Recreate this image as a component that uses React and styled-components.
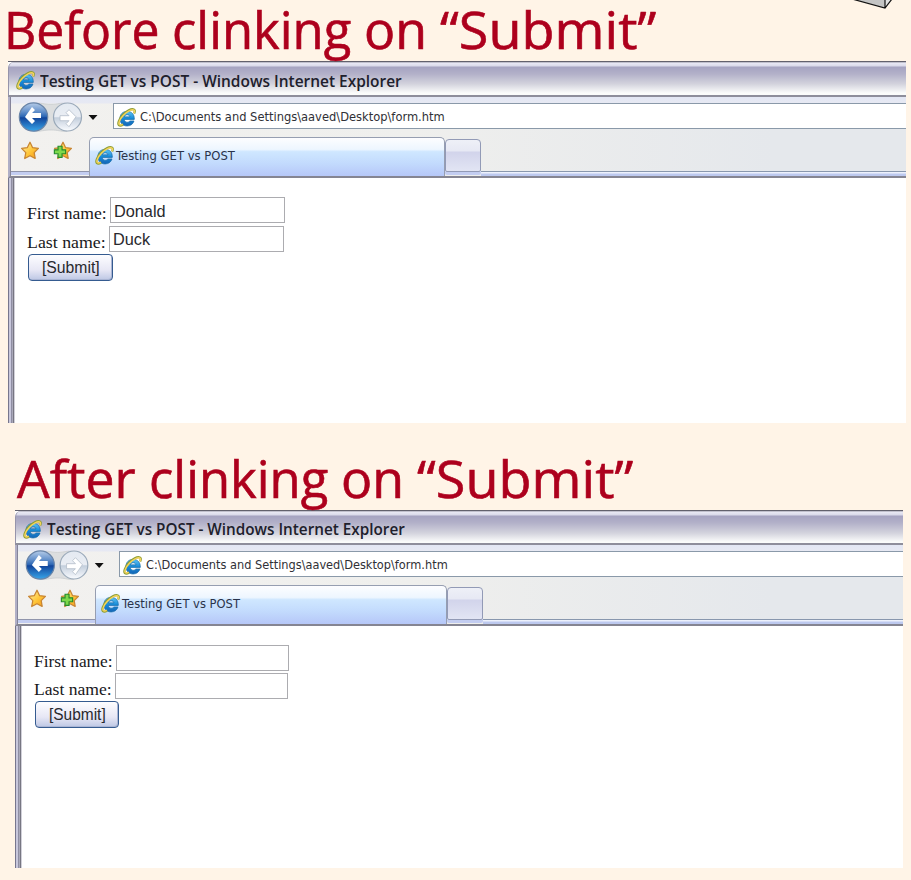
import React, { useId, useLayoutEffect, useRef, useState } from "react";
import styled, { createGlobalStyle, ThemeProvider } from "styled-components";

const GlobalStyle = createGlobalStyle`
  * { box-sizing: border-box; }
  html, body { margin: 0; background: #fff4e7; overflow: hidden; }
  input, button { margin: 0; }
`;

const sans = '"Open Sans", "Noto Sans", sans-serif';
const ui = '"DejaVu Sans", sans-serif';

const Slide = styled.main`
  position: relative;
  width: 911px;
  height: 880px;
  overflow: hidden;
  background: #fff4e7;
`;
const Corner = styled.svg`
  position: absolute;
  top: 0;
  left: 850px;
  z-index: 1;
`;
const Section = styled.section`
  display: flow-root;
  height: ${(p) => p.$height}px;
`;
const Heading = styled.h1`
  display: flex;
  margin: 0 0 0 ${(p) => p.$left}px;
  height: 61px;
  font: 400 50.5px/60px ${sans};
  color: #ad001d;
  -webkit-text-stroke: 0.6px #ad001d;
`;

const FitBox = styled.span`
  display: block;
  flex: none;
  width: ${(p) => p.$width}px;
  white-space: pre;
`;
const FitInner = styled.span`
  display: inline-block;
  transform-origin: 0 50%;
`;

/* Keeps a line of text at a fixed width by condensing its glyphs. */
function Fit({ width, children }) {
  const ref = useRef(null);
  const [scale, setScale] = useState(1);
  useLayoutEffect(() => {
    setScale(width / ref.current.offsetWidth);
  }, [width]);
  return (
    <FitBox $width={width}>
      <FitInner ref={ref} style={{ transform: `scaleX(${scale})` }}>
        {children}
      </FitInner>
    </FitBox>
  );
}

const Window = styled.div`
  width: ${(p) => p.theme.width}px;
  height: ${(p) => p.theme.height}px;
  margin-left: ${(p) => p.theme.left}px;
  display: flex;
  flex-direction: column;
  overflow: hidden;
  background: #fff;
  border-top: 1px solid #62616d;
`;
const TitleBar = styled.header`
  flex: none;
  height: ${(p) => p.theme.title}px;
  display: flex;
  align-items: center;
  gap: 5px;
  padding: 4px 0 0 7px;
  border-bottom: 2px solid #8e8e9b;
  border-left: 1px solid #9694ab;
  border-top-left-radius: 6px;
  background: linear-gradient(#9796a4 0, #e9e9f5 1px, #d9d9e9 4px, #a5a3c1 5px, #b3b1c9 12px, #d3d3dd 22px, #fbfcfb 31px);
  font: 600 16px/20px ${sans};
  color: #20202c;
`;
const Chrome = styled.div`
  flex: none;
  height: ${(p) => p.theme.chrome}px;
  border-left: 2px solid #b1afc6;
  padding-left: 1px;
  border-bottom: 2px solid #858592;
  box-shadow: inset 1px 0 #85849a;
  background: linear-gradient(90deg, #f2f1ef 0, #efefed 45%, #e5e8ec 85%);
  display: flex;
  flex-direction: column;
`;
const NavRow = styled.div`
  height: ${(p) => p.theme.nav}px;
  display: flex;
  align-items: flex-start;
  padding-top: 6px;
  background: linear-gradient(#e3e7f4 0, #e7e9f3 6px, transparent 7px);
`;
const NavButtons = styled.svg`
  flex: none;
  margin: -2px 0 0 6px;
  width: ${(p) => p.theme.navIcons}px;
  height: 33px;
`;
const Address = styled.div`
  flex: 1;
  height: ${(p) => p.theme.address}px;
  border: 1px solid #8a99a9;
  border-right: 0;
  background: #fff;
  display: flex;
  align-items: center;
  gap: 4px;
  padding: 2px 0 0 3px;
  font: 400 12.8px/18px ${ui};
  color: #303036;
`;
const TabRow = styled.div`
  flex: 1;
  min-height: 0;
  display: flex;
  align-items: flex-end;
`;
const Favorites = styled.div`
  width: ${(p) => p.theme.favorites}px;
  height: calc(100% - 4px);
  flex: none;
  display: flex;
  align-items: center;
  gap: 13px;
  padding: 0 0 3px 9px;
  border-bottom: 1px solid #9095ac;
  box-shadow: 0 3px #c3cdf1;
  margin-bottom: 4px;
`;
const ActiveTab = styled.div`
  width: ${(p) => p.theme.tab}px;
  height: ${(p) => p.theme.tabHeight}px;
  flex: none;
  display: flex;
  align-items: center;
  gap: 2px;
  padding: 0 0 3px 5px;
  border: 1px solid #969eb1;
  border-bottom: 0;
  border-radius: 5px 5px 0 0;
  background: linear-gradient(#fdfdff 0, #edf6ff 30%, #cfe7ff 36%, #c2dafd 68%, #b6c7f8 100%);
  font: 400 12.5px/18px ${ui};
  color: #29334a;
`;
const NewTab = styled.div`
  width: 36px;
  height: ${(p) => p.theme.tabHeight - 6}px;
  flex: none;
  margin-bottom: 4px;
  border: 1px solid #929ab6;
  border-radius: 4px 4px 2px 2px;
  background: linear-gradient(#eef0f7 0, #e7e9f4 34%, #d2d4eb 40%, #e2e5f4 100%);
  box-shadow: 0 3px #c3cdf1;
`;
const TabStrip = styled.div`
  flex: 1;
  height: 5px;
  border-top: 1px solid #8897ae;
  background: linear-gradient(#edf1fc 1px, #bdc9ef 2px);
`;
const Page = styled.div`
  flex: 1;
  display: flex;
  background: #fff;
`;
const Edge = styled.div`
  width: 7px;
  flex: none;
  background: linear-gradient(90deg, #77768d 0 1px, #c8c7dc 1px 3px, #8f8ea3 3px 4px, #aaa9ba 4px 5px, #777682 5px 6px, #d1d0d9 6px 7px);
`;
const Form = styled.form`
  padding: ${(p) => p.theme.pageTop}px 0 0 12px;
`;
const Field = styled.label`
  display: flex;
  height: ${(p) => p.theme.field}px;
  align-items: flex-start;
  font: 400 17.6px/20px "Liberation Serif", serif;
  color: #18181b;
`;
const LabelText = styled.span`
  padding-top: 6px;
  margin-right: 3px;
`;
const TextInput = styled.input`
  width: ${(p) => p.theme.input}px;
  height: 26px;
  padding: 2px 3px 0;
  border: 1px solid #acacb0;
  outline: 0;
  border-radius: 0;
  background: #fff;
  font: 400 16.3px/22px "Liberation Sans", sans-serif;
  color: #29292e;
`;
const Submit = styled.button`
  display: flex;
  align-items: center;
  margin-left: 1px;
  width: ${(p) => p.theme.submit}px;
  height: 27px;
  padding: 0 0 0 13px;
  border: 1px solid #355b90;
  border-radius: 4px;
  background: linear-gradient(#fdfdff, #e7e7f5 60%, #bdc7e4);
  box-shadow: inset -1px -1px #aab5d4;
  font: 400 16px/22px "Liberation Sans", sans-serif;
  color: #29292e;
  text-align: left;
`;
const Glyph = styled.svg`
  flex: none;
  display: block;
`;

function ExplorerIcon() {
  const id = useId();
  return (
    <Glyph width="19" height="19" viewBox="0.5 0.5 18 18">
      <defs>
        <linearGradient id={id} x2="0" y2="1">
          <stop stopColor="#5fc5f3" />
          <stop offset=".5" stopColor="#188bd9" />
          <stop offset="1" stopColor="#1565b6" />
        </linearGradient>
      </defs>
      <path d="M16.9 11.3H7.4c.2 1.7 1.1 2.7 2.9 2.7 1.2 0 2-.5 2.4-1.2h3.9c-.9 2.9-3.3 4.7-6.5 4.7-4.2 0-6.8-2.8-6.8-7C3.3 6.4 6 3.7 10 3.7c4.3 0 7.1 2.7 6.9 7.6ZM7.5 8.9h5.3C12.5 7.6 11.6 6.9 10.2 6.9S7.8 7.6 7.5 8.9Z" fill={`url(#${id})`} stroke="#176da9" strokeWidth=".7" />
      <path d="M16.7 5.8c.8-1.8.9-3.3-.3-3.9-2.2-1-6.8 1.3-10.3 5.1C2.4 11 .9 15.4 2.4 16.8c.9.8 2.4.4 4-.6" fill="none" stroke="#8f9e36" strokeWidth="2.2" />
      <path d="M16.5 5.6c.7-1.6.7-2.8-.2-3.2-1.9-.9-6.3 1.4-9.7 5C3 11.2 1.6 15 2.7 16.2c.7.7 1.9.4 3.2-.3" fill="none" stroke="#f4d45c" strokeWidth="1.4" />
    </Glyph>
  );
}

function Navigation() {
  const id = useId();
  const arrow = "m9-1-7-7-3 3 3 3h-9v5h9l-3 3 3 3Z";
  return (
    <NavButtons viewBox="0 0 96 33" preserveAspectRatio="none">
      <defs>
        <linearGradient id={`${id}b`} x2="0" y2="1">
          <stop stopColor="#b6cce8" />
          <stop offset=".3" stopColor="#6793cc" />
          <stop offset=".48" stopColor="#2f68b5" />
          <stop offset=".53" stopColor="#12459b" />
          <stop offset="1" stopColor="#38a6ea" />
        </linearGradient>
        <linearGradient id={`${id}f`} x2="0" y2="1">
          <stop stopColor="#e4eaf2" />
          <stop offset=".48" stopColor="#e9edf3" />
          <stop offset=".53" stopColor="#c4cfdd" />
          <stop offset="1" stopColor="#fafcff" />
        </linearGradient>
      </defs>
      <path d="M17 2.5c8-1 9 .8 17 .8s8-1.8 16-.8v28c-8 0-8-1.5-16-1.5s-9 1.5-17 1.5Z" fill="#dcdedf" stroke="#c0c4c7" strokeWidth=".6" />
      <circle cx="16.5" cy="16" r="14.2" fill={`url(#${id}b)`} stroke="#6984a7" strokeWidth="1.2" />
      <circle cx="50.5" cy="16" r="14" fill={`url(#${id}f)`} stroke="#9aa9b9" strokeWidth="1.2" />
      <path d={arrow} transform="translate(17 15) rotate(180)" fill="#fff" />
      <path d={arrow} transform="translate(50 16.7)" fill="#fff" stroke="#b3bdc9" strokeWidth=".8" />
      <path d="M71.5 14h9L76 19Z" fill="#111" />
    </NavButtons>
  );
}

const starPath = "m9.5 1.2 2.4 5 5.6.8-4 4 .9 5.6-4.9-2.6-5 2.6 1-5.6-4-4 5.5-.8Z";

function Star({ add }) {
  const id = useId();
  return (
    <Glyph width="20" height="20" viewBox="0 0 19 19">
      <defs>
        <linearGradient id={id} x1="0" y1="0" x2="1" y2="1">
          <stop stopColor="#fff3ab" />
          <stop offset=".55" stopColor="#ffc638" />
          <stop offset="1" stopColor="#f39119" />
        </linearGradient>
      </defs>
      <path d={starPath} fill={`url(#${id})`} stroke="#c88532" strokeWidth="1.2" strokeLinejoin="round" />
      {add && <path d="M4.8 5h3.8v3.4H12v3.7H8.6v3.5H4.8v-3.5H1.3V8.4h3.5Z" fill="#7ed84b" stroke="#248c2c" strokeWidth="1.1" />}
    </Glyph>
  );
}

function Browser({ metrics, first, last }) {
  return (
    <ThemeProvider theme={metrics}>
      <Window>
        <TitleBar>
          <ExplorerIcon />
          <Fit width={metrics.titleText}>Testing GET vs POST - Windows Internet Explorer</Fit>
        </TitleBar>
        <Chrome>
          <NavRow>
            <Navigation />
            <Address>
              <ExplorerIcon />
              <Fit width={metrics.addressText}>{"C:\\Documents and Settings\\aaved\\Desktop\\form.htm"}</Fit>
            </Address>
          </NavRow>
          <TabRow>
            <Favorites>
              <Star />
              <Star add />
            </Favorites>
            <ActiveTab>
              <ExplorerIcon />
              <Fit width={metrics.tabText}>Testing GET vs POST</Fit>
            </ActiveTab>
            <NewTab />
            <TabStrip />
          </TabRow>
        </Chrome>
        <Page>
          <Edge />
          <Form onSubmit={(e) => e.preventDefault()}>
            <Field>
              <LabelText><Fit width={metrics.firstLabel}>First name:</Fit></LabelText>
              <TextInput defaultValue={first} />
            </Field>
            <Field>
              <LabelText><Fit width={metrics.firstLabel - 1}>Last name:</Fit></LabelText>
              <TextInput defaultValue={last} />
            </Field>
            <Submit type="submit"><Fit width={metrics.submitText}>[Submit]</Fit></Submit>
          </Form>
        </Page>
      </Window>
    </ThemeProvider>
  );
}

const before = {
  left: 8, width: 898, height: 362, title: 35, chrome: 81, nav: 37,
  navIcons: 96, address: 26, favorites: 78, tab: 356, tabHeight: 39,
  titleText: 362, addressText: 305, tabText: 119, pageTop: 19,
  field: 28.5, firstLabel: 80, input: 175, submit: 85, submitText: 58,
};
const after = {
  left: 15, width: 888, height: 358, title: 34, chrome: 81, nav: 36,
  navIcons: 95, address: 26, favorites: 77, tab: 352, tabHeight: 39,
  titleText: 358, addressText: 302, tabText: 118, pageTop: 19,
  field: 28.2, firstLabel: 79, input: 173, submit: 84, submitText: 57,
};

export default function App() {
  return (
    <>
      <GlobalStyle />
      <Slide>
        <Corner width="45" height="10" viewBox="0 0 45 10">
          <path d="M3-1 35 8V-1Z" fill="#c4c4c4" />
          <path d="M35 8V-1h7Z" fill="#e2e2e2" />
          <path d="M2-1 35 8 42-1M35-1v9" fill="none" stroke="#111" strokeWidth="1.2" />
        </Corner>
        <Section $height={449}>
          <Heading $left={4}>
            <Fit width={168}>{"Before "}</Fit>
            <Fit width={192}>{"clinking "}</Fit>
            <Fit width={76}>{"on "}</Fit>
            <Fit width={216}>“Submit”</Fit>
          </Heading>
          <Browser metrics={before} first="Donald" last="Duck" />
        </Section>
        <Section $height={431}>
          <Heading $left={17}>
            <Fit width={132}>{"After "}</Fit>
            <Fit width={192}>{"clinking "}</Fit>
            <Fit width={76}>{"on "}</Fit>
            <Fit width={216}>“Submit”</Fit>
          </Heading>
          <Browser metrics={after} first="" last="" />
        </Section>
      </Slide>
    </>
  );
}
